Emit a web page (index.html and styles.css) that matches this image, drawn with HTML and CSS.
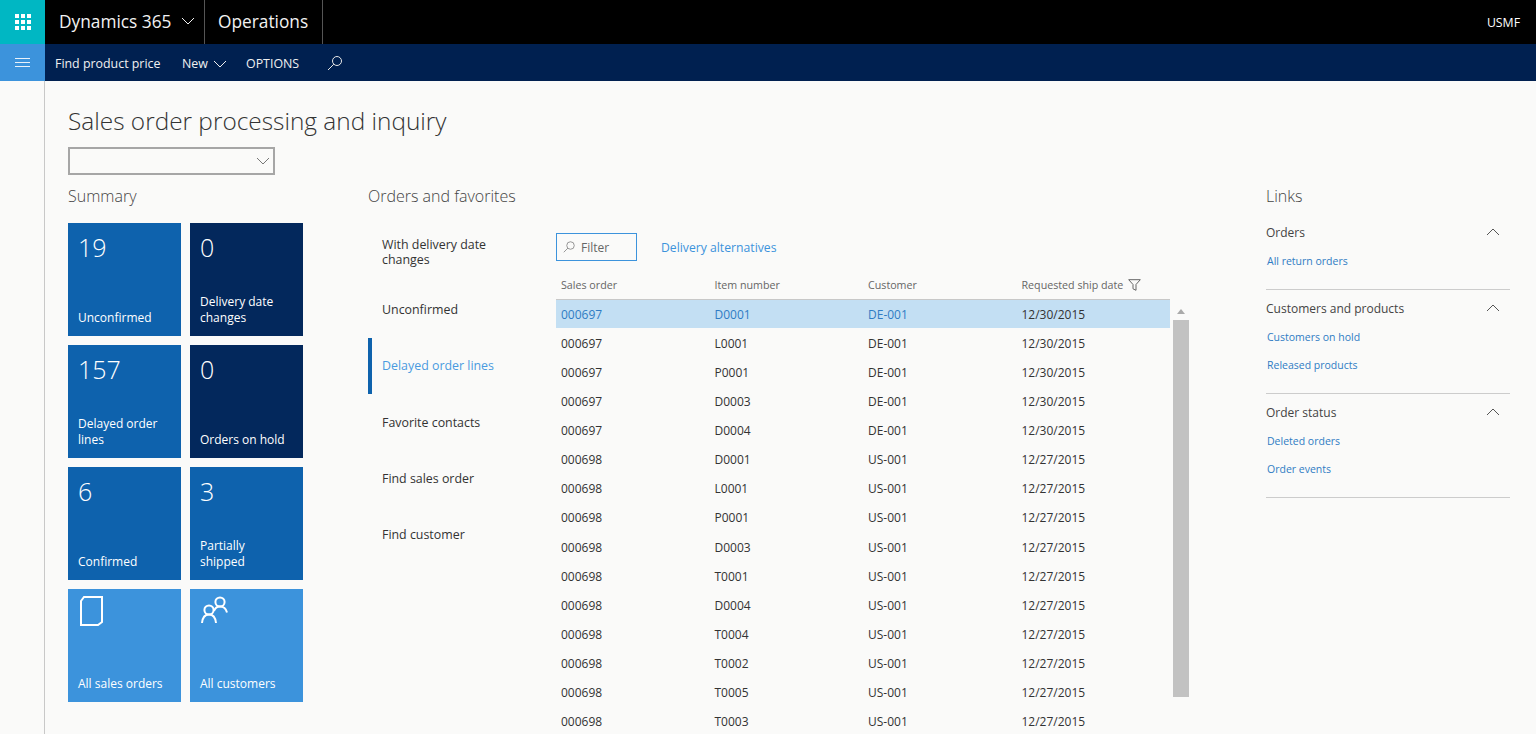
FILE: index.html
```html
<!DOCTYPE html>
<html lang="en">
<head>
  <meta charset="UTF-8">
  <meta name="viewport" content="width=device-width, initial-scale=1.0">
  <title>Sales order processing and inquiry</title>
  <link rel="stylesheet" href="styles.css">
</head>
<body>
  <!-- Top bar -->
  <header class="topbar">
    <div class="waffle">
      <svg width="16" height="16" viewBox="0 0 16 16" fill="#fff">
        <rect x="0" y="0" width="4" height="4"/><rect x="6" y="0" width="4" height="4"/><rect x="12" y="0" width="4" height="4"/>
        <rect x="0" y="6" width="4" height="4"/><rect x="6" y="6" width="4" height="4"/><rect x="12" y="6" width="4" height="4"/>
        <rect x="0" y="12" width="4" height="4"/><rect x="6" y="12" width="4" height="4"/><rect x="12" y="12" width="4" height="4"/>
      </svg>
    </div>
    <div class="brand">
      <span>Dynamics 365</span>
      <svg class="chevron" width="14" height="8" viewBox="0 0 14 8"><path d="M1 1l6 6 6-6"/></svg>
    </div>
    <div class="module">Operations</div>
    <div class="company">USMF</div>
  </header>

  <!-- Action bar -->
  <nav class="actionbar">
    <div class="hamburger"><span></span><span></span><span></span></div>
    <a class="action first">Find product price</a>
    <a class="action new">New <svg class="chevron" width="14" height="8" viewBox="0 0 14 8"><path d="M1 1l6 6 6-6"/></svg></a>
    <a class="action options">OPTIONS</a>
    <svg class="action-search" width="16" height="16" viewBox="0 0 16 16"><circle cx="10" cy="6" r="4.5"/><path d="M6.8 9.2L1 15"/></svg>
  </nav>

  <div class="page">
    <div class="rail"></div>
    <main class="content">
      <h1>Sales order processing and inquiry</h1>
      <div class="select">
        <svg width="14" height="8" viewBox="0 0 14 8"><path d="M1 1l6 6 6-6"/></svg>
      </div>

      <div class="columns">
        <section class="summary">
          <h2>Summary</h2>
          <div class="tiles">
            <div class="tile mid"><div class="count">19</div><div class="label">Unconfirmed</div></div>
            <div class="tile dark"><div class="count">0</div><div class="label">Delivery date changes</div></div>
            <div class="tile mid"><div class="count">157</div><div class="label">Delayed order lines</div></div>
            <div class="tile dark"><div class="count">0</div><div class="label">Orders on hold</div></div>
            <div class="tile mid"><div class="count">6</div><div class="label">Confirmed</div></div>
            <div class="tile mid"><div class="count">3</div><div class="label">Partially shipped</div></div>
            <div class="tile light">
              <svg class="tile-icon" width="26" height="32" viewBox="0 0 26 32"><path d="M6 2h18v25l-4 3H3V6z"/></svg>
              <div class="label">All sales orders</div>
            </div>
            <div class="tile light">
              <svg class="tile-icon" width="30" height="32" viewBox="0 0 30 32">
                <circle cx="20" cy="7" r="4.6"/><path d="M14 16c1-3 3-4.500 6-4.500s6 2 7 6"/>
                <circle cx="9" cy="15" r="4.600"/><path d="M2 28c.5-5 3-8.500 7-8.500s6.500 3.500 7 8.500"/>
              </svg>
              <div class="label">All customers</div>
            </div>
          </div>
        </section>

        <section class="orders">
          <h2>Orders and favorites</h2>
          <div class="orders-body">
            <ul class="tabs">
              <li class="two-line">With delivery date changes</li>
              <li>Unconfirmed</li>
              <li class="active">Delayed order lines</li>
              <li>Favorite contacts</li>
              <li>Find sales order</li>
              <li>Find customer</li>
            </ul>
            <div class="list">
              <div class="list-tools">
                <div class="filter">
                  <svg width="12" height="12" viewBox="0 0 16 16"><circle cx="10" cy="6" r="5"/><path d="M6.500 9.500L1 15"/></svg>
                  <span>Filter</span>
                </div>
                <a class="link-alt">Delivery alternatives</a>
              </div>
              <div class="grid-wrap">
                <table class="grid">
                  <thead>
                    <tr>
                      <th>Sales order</th>
                      <th>Item number</th>
                      <th>Customer</th>
                      <th>Requested ship date <svg width="13" height="12" viewBox="0 0 13 12"><path d="M.7.7h11.600L8 5.500v5.800l-3-1.500V5.500z"/></svg></th>
                    </tr>
                  </thead>
                  <tbody>
                    <tr class="selected"><td>000697</td><td>D0001</td><td>DE-001</td><td>12/30/2015</td></tr>
                    <tr><td>000697</td><td>L0001</td><td>DE-001</td><td>12/30/2015</td></tr>
                    <tr><td>000697</td><td>P0001</td><td>DE-001</td><td>12/30/2015</td></tr>
                    <tr><td>000697</td><td>D0003</td><td>DE-001</td><td>12/30/2015</td></tr>
                    <tr><td>000697</td><td>D0004</td><td>DE-001</td><td>12/30/2015</td></tr>
                    <tr><td>000698</td><td>D0001</td><td>US-001</td><td>12/27/2015</td></tr>
                    <tr><td>000698</td><td>L0001</td><td>US-001</td><td>12/27/2015</td></tr>
                    <tr><td>000698</td><td>P0001</td><td>US-001</td><td>12/27/2015</td></tr>
                    <tr><td>000698</td><td>D0003</td><td>US-001</td><td>12/27/2015</td></tr>
                    <tr><td>000698</td><td>T0001</td><td>US-001</td><td>12/27/2015</td></tr>
                    <tr><td>000698</td><td>D0004</td><td>US-001</td><td>12/27/2015</td></tr>
                    <tr><td>000698</td><td>T0004</td><td>US-001</td><td>12/27/2015</td></tr>
                    <tr><td>000698</td><td>T0002</td><td>US-001</td><td>12/27/2015</td></tr>
                    <tr><td>000698</td><td>T0005</td><td>US-001</td><td>12/27/2015</td></tr>
                    <tr><td>000698</td><td>T0003</td><td>US-001</td><td>12/27/2015</td></tr>
                  </tbody>
                </table>
                <div class="scrollbar">
                  <div class="scroll-up"></div>
                  <div class="scroll-thumb"></div>
                </div>
              </div>
            </div>
          </div>
        </section>

        <section class="links">
          <h2>Links</h2>
          <div class="link-group">
            <div class="group-head">Orders <svg width="14" height="8" viewBox="0 0 14 8"><path d="M1 7l6-6 6 6"/></svg></div>
            <a>All return orders</a>
          </div>
          <div class="link-group">
            <div class="group-head">Customers and products <svg width="14" height="8" viewBox="0 0 14 8"><path d="M1 7l6-6 6 6"/></svg></div>
            <a>Customers on hold</a>
            <a>Released products</a>
          </div>
          <div class="link-group">
            <div class="group-head">Order status <svg width="14" height="8" viewBox="0 0 14 8"><path d="M1 7l6-6 6 6"/></svg></div>
            <a>Deleted orders</a>
            <a>Order events</a>
          </div>
        </section>
      </div>
    </main>
  </div>
</body>
</html>
```

FILE: styles.css
```css
* {
  margin: 0;
  padding: 0;
  box-sizing: border-box;
}

html, body {
  height: 100%;
  overflow: hidden;
}

body {
  font-family: "Open Sans", "Noto Sans", sans-serif;
  font-size: 12px;
  color: #333;
  background: #fafaf9;
}

svg {
  fill: none;
  stroke: currentColor;
}

/* Top bar */
.topbar {
  display: flex;
  align-items: stretch;
  height: 44px;
  background: #000;
  color: #fff;
}

.waffle {
  display: flex;
  align-items: center;
  justify-content: center;
  width: 45px;
  background: #00b7c3;
}

.waffle svg {
  stroke: none;
  fill: #fff;
}

.brand, .module {
  display: flex;
  align-items: center;
  padding-bottom: 2px;
  font-size: 17.300px;
  color: #f2f2f2;
  border-right: 1px solid #555;
}

.brand {
  gap: 10px;
  width: 160px;
  padding-left: 14px;
}

.module {
  width: 118px;
  padding-left: 13px;
}

.company {
  margin-left: auto;
  padding-right: 16px;
  align-self: center;
  font-size: 12.300px;
  font-weight: 500;
}

/* Action bar */
.actionbar {
  display: flex;
  align-items: center;
  height: 37px;
  background: #002050;
  color: #f0f0f0;
  font-size: 12.400px;
  font-weight: 500;
}

.hamburger {
  display: flex;
  flex-direction: column;
  justify-content: center;
  gap: 3px;
  width: 45px;
  height: 100%;
  padding: 0 15px;
  background: #3c93dc;
}

.hamburger span {
  display: block;
  height: 1px;
  background: #e8f2fb;
}

.action {
  display: flex;
  align-items: center;
  gap: 5px;
  margin-top: 2px;
  white-space: nowrap;
}

.action.first {
  margin-left: 10px;
  width: 127px;
}

.action.new {
  width: 64px;
}

.action.options {
  width: 81px;
}

.action-search {
  stroke: #e8e8e8;
}

/* Page */
.page {
  display: flex;
  height: calc(100% - 81px);
}

.rail {
  flex: 0 0 45px;
  border-right: 1px solid #c8c8c8;
}

.content {
  flex: 1;
  padding: 22px 26px 0 23px;
}

h1 {
  font-size: 24.400px;
  font-weight: 300;
  line-height: 36px;
  color: #333;
}

h2 {
  font-size: 16px;
  font-weight: 300;
  line-height: 22px;
  color: #444;
}

.select {
  display: flex;
  align-items: center;
  justify-content: flex-end;
  width: 207px;
  height: 28px;
  margin-top: 8px;
  padding-right: 3px;
  border: 2px solid #a6a6a6;
  color: #777;
}

.columns {
  display: flex;
  margin-top: 10px;
}

/* Summary tiles */
.summary {
  flex: 0 0 300px;
}

.tiles {
  display: grid;
  grid-template-columns: 113px 113px;
  grid-auto-rows: 113px;
  gap: 9px;
  margin-top: 16px;
}

.tile {
  display: flex;
  flex-direction: column;
  justify-content: space-between;
  padding: 6px 10px 10px;
  color: #fff;
  font-size: 12px;
}

.tile.mid { background: #0e62ad; }
.tile.dark { background: #03285c; }
.tile.light { background: #3c93dc; }

.count {
  font-size: 25px;
  font-weight: 300;
  line-height: 36px;
}

.label {
  max-width: 90px;
  line-height: 16px;
}

.tile-icon {
  stroke-width: 2;
}

/* Orders */
.orders {
  flex: 0 0 898px;
}

.orders-body {
  display: flex;
  margin-top: 16px;
}

.tabs {
  flex: 0 0 188px;
  list-style: none;
  font-size: 12.400px;
}

.tabs li {
  display: flex;
  align-items: center;
  height: 56px;
  padding: 0 30px 0 14px;
  color: #333;
}

.tabs li.two-line {
  height: 58px;
  line-height: 15px;
}

.tabs li.active {
  margin-top: 1px;
  padding-left: 10px;
  padding-bottom: 1px;
  color: #4a9ae0;
  border-left: 4px solid #0e62ad;
}

.list-tools {
  display: flex;
  align-items: center;
  gap: 24px;
  height: 28px;
  margin-top: 10px;
}

.filter {
  display: flex;
  align-items: center;
  gap: 6px;
  width: 81px;
  height: 28px;
  padding-left: 6px;
  border: 1px solid #3c93dc;
  color: #666;
}

.filter svg {
  stroke: #777;
}

.link-alt {
  font-size: 12.200px;
  color: #3c93dc;
}

.grid-wrap {
  display: flex;
  margin-top: 10px;
}

.grid {
  width: 614px;
  table-layout: fixed;
  border-collapse: collapse;
}

.grid th {
  height: 28px;
  padding-left: 5px;
  font-size: 10.700px;
  font-weight: 400;
  text-align: left;
  color: #666;
  border-bottom: 1px solid #c8c8c8;
}

.grid th svg {
  margin-left: 2px;
  vertical-align: -2px;
  stroke: #666;
}

.grid td {
  height: 29.070px;
  padding: 2px 0 0 5px;
  white-space: nowrap;
}

.grid .selected {
  background: #c3dff3;
}

.grid .selected td:nth-child(-n+3) {
  color: #2f7cc4;
}

.scrollbar {
  flex: 0 0 16px;
  margin: 29px 0 0 3px;
}

.scroll-up {
  width: 0;
  height: 0;
  margin: 9px auto 6px;
  border-left: 4px solid transparent;
  border-right: 4px solid transparent;
  border-bottom: 5px solid #aaa;
}

.scroll-thumb {
  height: 377px;
  background: #c2c2c2;
}

/* Links */
.links {
  flex: 0 0 244px;
}

.link-group {
  padding-bottom: 16px;
  border-bottom: 1px solid #ccc;
}

.link-group + .link-group {
  padding-top: 8px;
}

.links h2 {
  margin-bottom: 15px;
}

.group-head {
  display: flex;
  justify-content: space-between;
  align-items: center;
  height: 20px;
  margin-bottom: 3px;
  padding-right: 10px;
  font-size: 12px;
  color: #444;
}

.group-head svg {
  stroke: #555;
}

.link-group a {
  display: block;
  height: 28px;
  padding: 9px 0 0 1px;
  font-size: 10.500px;
  color: #2f7cc4;
}
```
